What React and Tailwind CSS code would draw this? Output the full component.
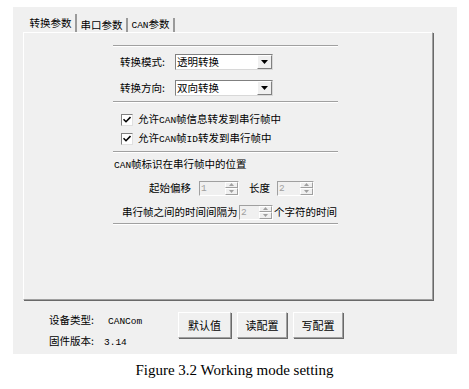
import React from 'react';

// SimSun-like look: CJK glyphs in Noto Sans CJK, latin bits in a narrow mono
const cjk = { fontFamily: '"Noto Sans CJK SC", "Liberation Sans", sans-serif' };

function Lat({ children }) {
  return <span className="font-['Liberation_Mono',monospace] text-[9.5px]">{children}</span>;
}

function Etched() {
  return <div className="h-[2px] border-t border-t-[#a0a0a0] border-b border-b-white" />;
}

function Combo({ value }) {
  return (
    <div className="flex items-center w-[98px] h-[16px] bg-white border border-t-[#808080] border-l-[#808080] border-r-[#d8d8d8] border-b-[#d8d8d8]">
      <span className="flex-1 pl-[1px] leading-none">{value}</span>
      <div className="w-[15px] h-[14px] bg-[#f0f0f0] border border-t-white border-l-white border-r-[#808080] border-b-[#808080] flex items-center justify-center">
        <svg width="7" height="4" viewBox="0 0 7 4">
          <path d="M0 0h7L3.5 4z" fill="#000" />
        </svg>
      </div>
    </div>
  );
}

function Spinner() {
  return (
    <div className="w-[13px] h-full flex flex-col">
      <div className="flex-1 bg-[#f0f0f0] border border-t-white border-l-white border-r-[#a0a0a0] border-b-[#a0a0a0] flex items-center justify-center">
        <svg width="5" height="3" viewBox="0 0 5 3">
          <path d="M0 3h5L2.5 0z" fill="#a0a0a0" />
        </svg>
      </div>
      <div className="flex-1 bg-[#f0f0f0] border border-t-white border-l-white border-r-[#a0a0a0] border-b-[#a0a0a0] flex items-center justify-center">
        <svg width="5" height="3" viewBox="0 0 5 3">
          <path d="M0 0h5L2.5 3z" fill="#a0a0a0" />
        </svg>
      </div>
    </div>
  );
}

function Spin({ value, field }) {
  return (
    <div className="flex h-[15px] border border-t-[#a0a0a0] border-l-[#a0a0a0] border-r-white border-b-white bg-[#f0f0f0]">
      <span className={`${field} pl-[1px] leading-[13px] text-[#a0a0a0] font-['Liberation_Mono',monospace] text-[9.5px]`}>{value}</span>
      <Spinner />
    </div>
  );
}

function Check({ children }) {
  return (
    <div className="flex items-center h-[19px] pl-[8px]">
      <div className="w-[12px] h-[12px] bg-white border border-t-[#808080] border-l-[#808080] border-r-[#e0e0e0] border-b-[#e0e0e0] flex items-center justify-center">
        <svg width="8" height="7" viewBox="0 0 8 7">
          <path d="M0.5 3.2L3 5.7L7.5 1" stroke="#000" strokeWidth="1.6" fill="none" />
        </svg>
      </div>
      <span className="ml-[5px]">{children}</span>
    </div>
  );
}

function Btn({ children, w }) {
  return (
    <button className={`${w} h-[26px] bg-[#f0f0f0] border border-t-white border-l-white border-r-[#a0a0a0] border-b-[#a0a0a0] shadow-[1px_1px_0_#696969] text-[11px] leading-none`}>
      {children}
    </button>
  );
}

export default function App() {
  return (
    <div className="w-[469px] h-[389px] bg-white text-black text-[10.5px] leading-none overflow-hidden" style={cjk}>
      <div className="pt-[7px] pl-[13px]">
        <div className="w-[444px] h-[347px] bg-[#f0f0f0] flex flex-col">
          {/* tabs */}
          <div className="flex items-end h-[25px] pl-[13px]">
            <div className="w-[51px] h-[18px] border-r-2 border-r-[#9a9a9a] flex items-center justify-center">转换参数</div>
            <div className="w-[51px] h-[14px] border-r-2 border-r-[#9a9a9a] flex items-center justify-center">串口参数</div>
            <div className="w-[47px] h-[14px] border-r-2 border-r-[#9a9a9a] flex items-center justify-center">
              <span><Lat>CAN</Lat>参数</span>
            </div>
          </div>

          {/* tab page */}
          <div className="ml-[10px] w-[410px] h-[268px] border-l border-t border-l-white border-t-white border-r border-b border-r-[#a0a0a0] border-b-[#a0a0a0] shadow-[1px_1px_0_#696969]">
            <div className="ml-[89px] w-[225px] pt-[12px] flex flex-col">
              <Etched />
              <div className="flex items-center h-[16px] mt-[7px] pl-[7px]">
                <span className="w-[55px]">转换模式:</span>
                <Combo value="透明转换" />
              </div>
              <div className="flex items-center h-[16px] mt-[10px] pl-[7px]">
                <span className="w-[55px]">转换方向:</span>
                <Combo value="双向转换" />
              </div>
              <div className="mt-[5px]">
                <Etched />
              </div>
              <div className="mt-[7px]">
                <Check>允许<Lat>CAN</Lat>帧信息转发到串行帧中</Check>
                <Check>允许<Lat>CAN</Lat>帧<Lat>ID</Lat>转发到串行帧中</Check>
              </div>
              <div className="mt-[3px]">
                <Etched />
              </div>
              <div className="flex items-center h-[18px] mt-[3px] pl-[1px]">
                <span><Lat>CAN</Lat>帧标识在串行帧中的位置</span>
              </div>
              <div className="flex items-center h-[18px] mt-[5px] pl-[36px]">
                <span className="w-[50px]">起始偏移</span>
                <Spin value="1" field="w-[25px]" />
                <span className="ml-[10px] w-[28px]">长度</span>
                <Spin value="2" field="w-[22px]" />
              </div>
              <div className="flex items-center h-[18px] mt-[6px] pl-[9px]">
                <span className="w-[117px]">串行帧之间的时间间隔为</span>
                <Spin value="2" field="w-[19px]" />
                <span className="ml-[1px]">个字符的时间</span>
              </div>
              <div className="mt-[2px]">
                <Etched />
              </div>
            </div>
          </div>

          {/* bottom bar */}
          <div className="flex pl-[36px]">
            <div className="w-[129px] pt-[13px] flex flex-col gap-[7px]">
              <div className="h-[14px] leading-[14px]">
                <span className="inline-block w-[59px]">设备类型:</span>
                <Lat>CANCom</Lat>
              </div>
              <div className="h-[14px] leading-[14px]">
                <span className="inline-block w-[55px]">固件版本:</span>
                <Lat>3.14</Lat>
              </div>
            </div>
            <div className="pt-[12px] flex gap-[6px]">
              <Btn w="w-[53px]">默认值</Btn>
              <Btn w="w-[50px]">读配置</Btn>
              <Btn w="w-[50px]">写配置</Btn>
            </div>
          </div>
        </div>
      </div>

      <div className="mt-[8px] text-center font-['Liberation_Serif',serif] text-[15px] leading-[17px]">
        Figure 3.2 Working mode setting
      </div>
    </div>
  );
}
